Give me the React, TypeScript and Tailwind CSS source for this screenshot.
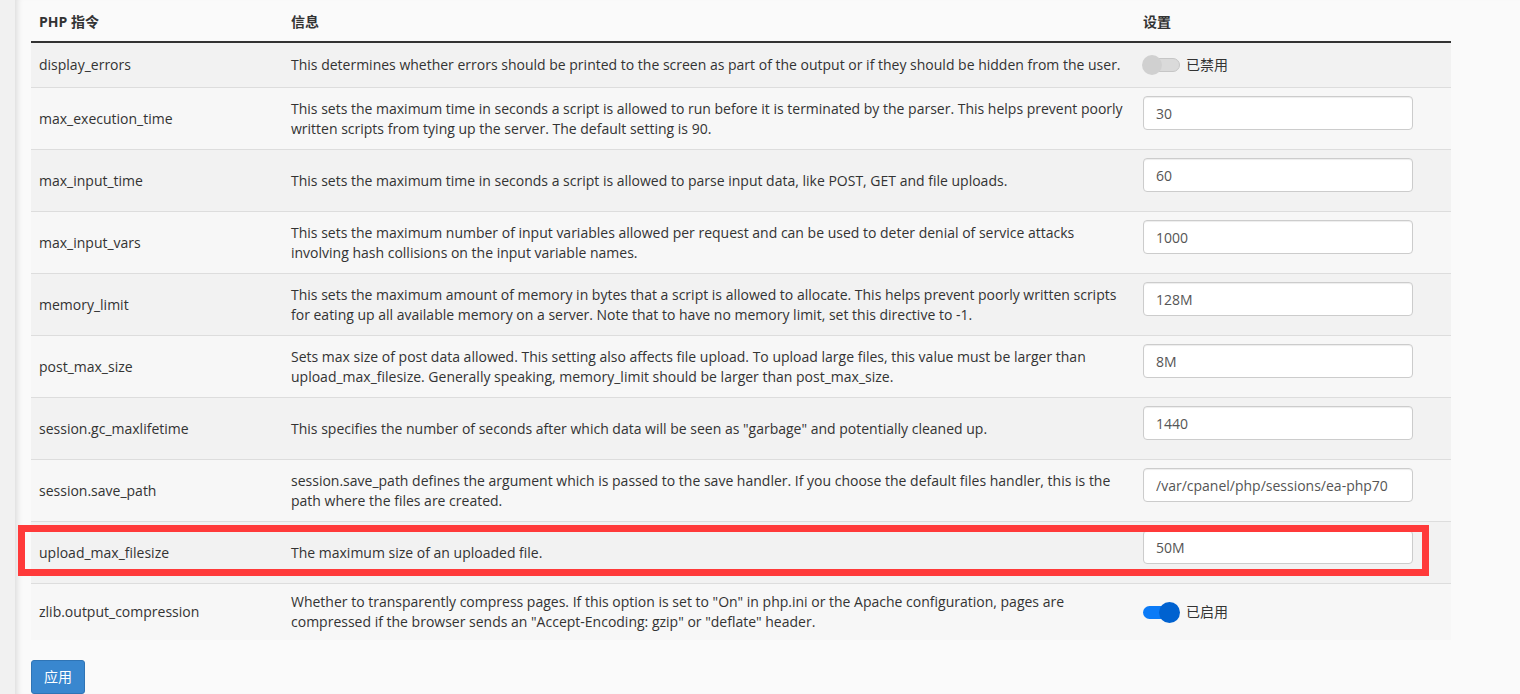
import React from "react";

type Setting = { type: "toggle"; on: boolean } | { type: "input"; value: string };
type Row = { name: string; info: string[]; setting: Setting };

const rows: Row[] = [
  {
    name: "display_errors",
    info: ["This determines whether errors should be printed to the screen as part of the output or if they should be hidden from the user."],
    setting: { type: "toggle", on: false },
  },
  {
    name: "max_execution_time",
    info: [
      "This sets the maximum time in seconds a script is allowed to run before it is terminated by the parser. This helps prevent poorly",
      "written scripts from tying up the server. The default setting is 90.",
    ],
    setting: { type: "input", value: "30" },
  },
  {
    name: "max_input_time",
    info: ["This sets the maximum time in seconds a script is allowed to parse input data, like POST, GET and file uploads."],
    setting: { type: "input", value: "60" },
  },
  {
    name: "max_input_vars",
    info: [
      "This sets the maximum number of input variables allowed per request and can be used to deter denial of service attacks",
      "involving hash collisions on the input variable names.",
    ],
    setting: { type: "input", value: "1000" },
  },
  {
    name: "memory_limit",
    info: [
      "This sets the maximum amount of memory in bytes that a script is allowed to allocate. This helps prevent poorly written scripts",
      "for eating up all available memory on a server. Note that to have no memory limit, set this directive to -1.",
    ],
    setting: { type: "input", value: "128M" },
  },
  {
    name: "post_max_size",
    info: [
      "Sets max size of post data allowed. This setting also affects file upload. To upload large files, this value must be larger than",
      "upload_max_filesize. Generally speaking, memory_limit should be larger than post_max_size.",
    ],
    setting: { type: "input", value: "8M" },
  },
  {
    name: "session.gc_maxlifetime",
    info: ['This specifies the number of seconds after which data will be seen as "garbage" and potentially cleaned up.'],
    setting: { type: "input", value: "1440" },
  },
  {
    name: "session.save_path",
    info: [
      "session.save_path defines the argument which is passed to the save handler. If you choose the default files handler, this is the",
      "path where the files are created.",
    ],
    setting: { type: "input", value: "/var/cpanel/php/sessions/ea-php70" },
  },
  {
    name: "upload_max_filesize",
    info: ["The maximum size of an uploaded file."],
    setting: { type: "input", value: "50M" },
  },
  {
    name: "zlib.output_compression",
    info: [
      'Whether to transparently compress pages. If this option is set to "On" in php.ini or the Apache configuration, pages are',
      'compressed if the browser sends an "Accept-Encoding: gzip" or "deflate" header.',
    ],
    setting: { type: "toggle", on: true },
  },
];

function Toggle({ on }: { on: boolean }) {
  return (
    <div className="flex h-[28px] items-center">
      {on ? (
        <div className="relative h-[21px] w-[37px]">
          <div className="absolute left-0 top-[4px] h-[13px] w-[26px] rounded-full bg-[#0b7bf7]" />
          <div className="absolute left-[16px] top-0 h-[21px] w-[21px] rounded-full bg-[#0062d0]" />
        </div>
      ) : (
        <div className="relative h-[20px] w-[37px]">
          <div className="absolute left-[6px] right-0 top-[3px] h-[14px] rounded-full border border-[#c6c6c6] bg-[#dadada]" />
          <div className="absolute left-[-1px] top-0 h-[20px] w-[20px] rounded-full bg-[#d0d0d0]" />
        </div>
      )}
      <span className="ml-[6px] text-[#333]">{on ? "已启用" : "已禁用"}</span>
    </div>
  );
}

export default function App() {
  return (
    <div
      className="flex min-h-screen bg-[#fafafa] text-[14px] leading-[20px] text-[#333]"
      style={{ fontFamily: '"Open Sans", "Noto Sans CJK SC", sans-serif' }}
    >
      <div className="w-[15px] shrink-0 bg-[#f1f1f1]" />
      <div className="relative flex-1 pl-[16px] shadow-[inset_7px_0_6px_-5px_rgba(0,0,0,0.13)]">
        <table className="w-[1420px] table-fixed border-collapse">
          <colgroup>
            <col className="w-[252px]" />
            <col className="w-[852px]" />
            <col className="w-[316px]" />
          </colgroup>
          <thead>
            <tr className="border-b-2 border-[#333]">
              <th className="px-2 pb-[9px] pt-[12px] text-left font-bold">PHP 指令</th>
              <th className="px-2 pb-[9px] pt-[12px] text-left font-bold">信息</th>
              <th className="px-2 pb-[9px] pt-[12px] text-left font-bold">设置</th>
            </tr>
          </thead>
          <tbody>
            {rows.map((r, i) => (
              <tr
                key={r.name}
                className={`${i % 2 === 0 ? "bg-[#f2f2f2]" : "bg-[#f7f7f7]"} ${i > 0 ? "border-t border-[#dddddd]" : ""}`}
              >
                <td className="p-2 align-middle">{r.name}</td>
                <td className="p-2 align-middle">
                  {r.info.map((l, k) => (
                    <div key={k} className="whitespace-nowrap">
                      {l}
                    </div>
                  ))}
                </td>
                <td className="p-2 align-middle">
                  {r.setting.type === "toggle" ? (
                    <Toggle on={r.setting.on} />
                  ) : (
                    <input
                      readOnly
                      defaultValue={r.setting.value}
                      className="mb-[11px] block h-[34px] w-[270px] rounded-[4px] border border-[#cccccc] bg-white px-3 text-[14px] text-[#555] shadow-[inset_0_1px_1px_rgba(0,0,0,0.075)] outline-none"
                    />
                  )}
                </td>
              </tr>
            ))}
          </tbody>
        </table>
        <button className="mt-5 h-[34px] w-[54px] rounded-[3px] border border-[#2f74b5] bg-[#3987cf] text-[14px] text-white">
          应用
        </button>
        <div className="pointer-events-none absolute left-[3px] top-[525px] h-[51px] w-[1411px] border-[7px] border-[#ff3a3a]" />
      </div>
    </div>
  );
}
